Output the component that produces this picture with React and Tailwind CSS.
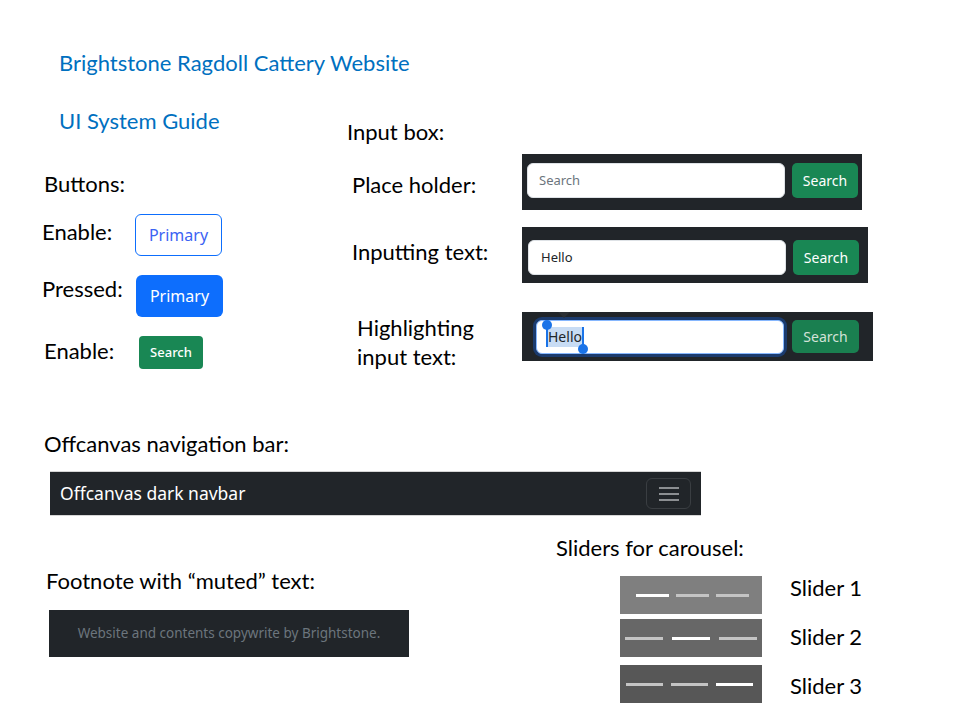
import React from 'react'

const slide = { fontFamily: 'Lato, "Open Sans", sans-serif' }
const ui = { fontFamily: '"Noto Sans", "Open Sans", sans-serif' }

function Label({ children, className = '' }) {
  return <div className={`text-[22px] leading-[29px] text-black whitespace-nowrap ${className}`}>{children}</div>
}

function SearchBtn({ className = '' }) {
  return (
    <div style={ui} className={`flex items-center justify-center rounded-[5px] text-[14px] ${className}`}>
      Search
    </div>
  )
}

function Slider({ bg, pad, gap, width, active }) {
  return (
    <div className={`flex items-center h-[38px] w-[142px] ${bg} ${pad} ${gap}`}>
      {[0, 1, 2].map(i => (
        <span key={i} className={`h-[3px] ${width} ${i === active ? 'bg-white' : 'bg-[#c4c4c4]'}`} />
      ))}
    </div>
  )
}

export default function App() {
  return (
    <div style={slide} className="w-[960px] h-[720px] bg-white overflow-hidden">
      {/* Title */}
      <div className="pt-[48px] pl-[59px] text-[22px] leading-[29px] text-[#0070c0]">
        Brightstone Ragdoll Cattery Website
      </div>

      <div className="flex mt-[29px]">
        {/* Left column: guide + buttons */}
        <div className="w-[300px] flex flex-col">
          <Label className="pl-[59px] !text-[#0070c0]">UI System Guide</Label>
          <Label className="pl-[44px] mt-[34px]">Buttons:</Label>

          <div className="flex items-start mt-[16px] pl-[42px]">
            <Label className="w-[93px] mt-[3px]">Enable:</Label>
            <div style={ui} className="w-[87px] h-[42px] flex items-center justify-center rounded-[6px] border border-[#0d6efd] text-[#3b63f3] text-[16px]">
              Primary
            </div>
          </div>

          <div className="flex items-start mt-[18px] pl-[42px]">
            <Label className="w-[94px]">Pressed:</Label>
            <div style={ui} className="mt-[1px] w-[87px] h-[42px] flex items-center justify-center rounded-[6px] bg-[#0d6efd] text-white text-[16px]">
              Primary
            </div>
          </div>

          <div className="flex items-start mt-[19px] pl-[44px]">
            <Label className="w-[95px]">Enable:</Label>
            <div style={ui} className="w-[64px] h-[33px] flex items-center justify-center rounded-[4px] bg-[#198754] text-white text-[13px] font-medium">
              Search
            </div>
          </div>
        </div>

        {/* Right column: input boxes */}
        <div className="flex flex-col">
          <Label className="ml-[47px] mt-[11px]">Input box:</Label>

          <div className="flex items-start mt-[8px]">
            <Label className="ml-[52px] w-[170px] mt-[16px]">Place holder:</Label>
            <div className="w-[340px] h-[56px] bg-[#212529] flex items-start pt-[9px] pl-[5px] gap-[7px]">
              <div style={ui} className="w-[258px] h-[35px] bg-white border border-[#dee2e6] rounded-[6px] flex items-center pl-[11px] text-[13px] text-[#6c757d]">
                Search
              </div>
              <SearchBtn className="w-[66px] h-[35px] bg-[#198754] text-white" />
            </div>
          </div>

          <div className="flex items-start mt-[17px]">
            <Label className="ml-[52px] w-[170px] mt-[10px]">Inputting text:</Label>
            <div className="w-[346px] h-[56px] bg-[#212529] flex items-start pt-[13px] pl-[6px] gap-[7px]">
              <div style={ui} className="w-[258px] h-[35px] bg-white border border-[#dee2e6] rounded-[6px] flex items-center pl-[12px] text-[13px] text-[#212529]">
                Hello
              </div>
              <SearchBtn className="w-[66px] h-[35px] bg-[#198754] text-white" />
            </div>
          </div>

          <div className="flex items-start mt-[29px]">
            <Label className="ml-[57px] w-[165px] mt-[1px]">
              Highlighting
              <br />
              input text:
            </Label>
            <div className="relative w-[351px] h-[49px] bg-[#212529] flex items-start pt-[8px] pl-[14px] gap-[8px]">
              <div className="relative w-[248px] h-[34px] bg-white border border-[#86b7fe] rounded-[6px] shadow-[0_0_0_3px_#1b3b6e] flex items-center pl-[9px]">
                <span style={ui} className="relative text-[14px] leading-[20px] text-[#212529] bg-[#c8dcf4] border-l-2 border-r-2 border-[#1a73e8]">
                  Hello
                  <span className="absolute -left-[6px] -top-[7px] w-[10px] h-[10px] rounded-full bg-[#1a73e8]" />
                  <span className="absolute -right-[6px] -bottom-[7px] w-[10px] h-[10px] rounded-full bg-[#1a73e8]" />
                </span>
              </div>
              <SearchBtn className="w-[67px] h-[33px] bg-[#1a7f50] text-[#d2e2d8]" />
              <span className="absolute left-[36px] top-0 w-0 h-0 border-l-[6px] border-r-[6px] border-t-[6px] border-l-transparent border-r-transparent border-t-[#2b2f33]" />
            </div>
          </div>
        </div>
      </div>

      {/* Offcanvas navbar */}
      <Label className="pl-[44px] mt-[58px]">Offcanvas navigation bar:</Label>
      <div className="ml-[50px] mt-[13px] w-[651px] h-[45px] bg-[#212529] border-y border-[#d6d6d6] flex items-center justify-between pl-[10px] pr-[10px]">
        <span style={ui} className="text-[17.5px] text-white">Offcanvas dark navbar</span>
        <div className="w-[45px] h-[31px] rounded-[6px] border border-[#3a3e42] flex flex-col items-center justify-center gap-[4px]">
          <span className="w-[20px] h-[2px] bg-[#8c8f92]" />
          <span className="w-[20px] h-[2px] bg-[#8c8f92]" />
          <span className="w-[20px] h-[2px] bg-[#8c8f92]" />
        </div>
      </div>

      {/* Footnote + sliders */}
      <div className="flex mt-[17px]">
        <div className="w-[500px] flex flex-col">
          <Label className="pl-[46px] mt-[33px]">Footnote with “muted” text:</Label>
          <div style={ui} className="ml-[49px] mt-[15px] w-[360px] h-[47px] bg-[#212529] flex items-center justify-center text-[13.5px] text-[#6c757d]">
            Website and contents copywrite by Brightstone.
          </div>
        </div>

        <div className="flex flex-col">
          <Label className="ml-[56px]">Sliders for carousel:</Label>

          <div className="flex items-start mt-[11px] ml-[120px]">
            <div className="mt-[3px]">
              <Slider bg="bg-[#7f7f7f]" pad="pl-[16px]" gap="gap-[7px]" width="w-[33px]" active={0} />
            </div>
            <Label className="ml-[28px]">Slider 1</Label>
          </div>

          <div className="flex items-start mt-[5px] ml-[120px]">
            <Slider bg="bg-[#676767]" pad="pl-[5px]" gap="gap-[9px]" width="w-[38px]" active={1} />
            <Label className="ml-[28px] mt-[3px]">Slider 2</Label>
          </div>

          <div className="flex items-start mt-[8px] ml-[120px]">
            <Slider bg="bg-[#575757]" pad="pl-[6px]" gap="gap-[8px]" width="w-[37px]" active={2} />
            <Label className="ml-[28px] mt-[6px]">Slider 3</Label>
          </div>
        </div>
      </div>
    </div>
  )
}
